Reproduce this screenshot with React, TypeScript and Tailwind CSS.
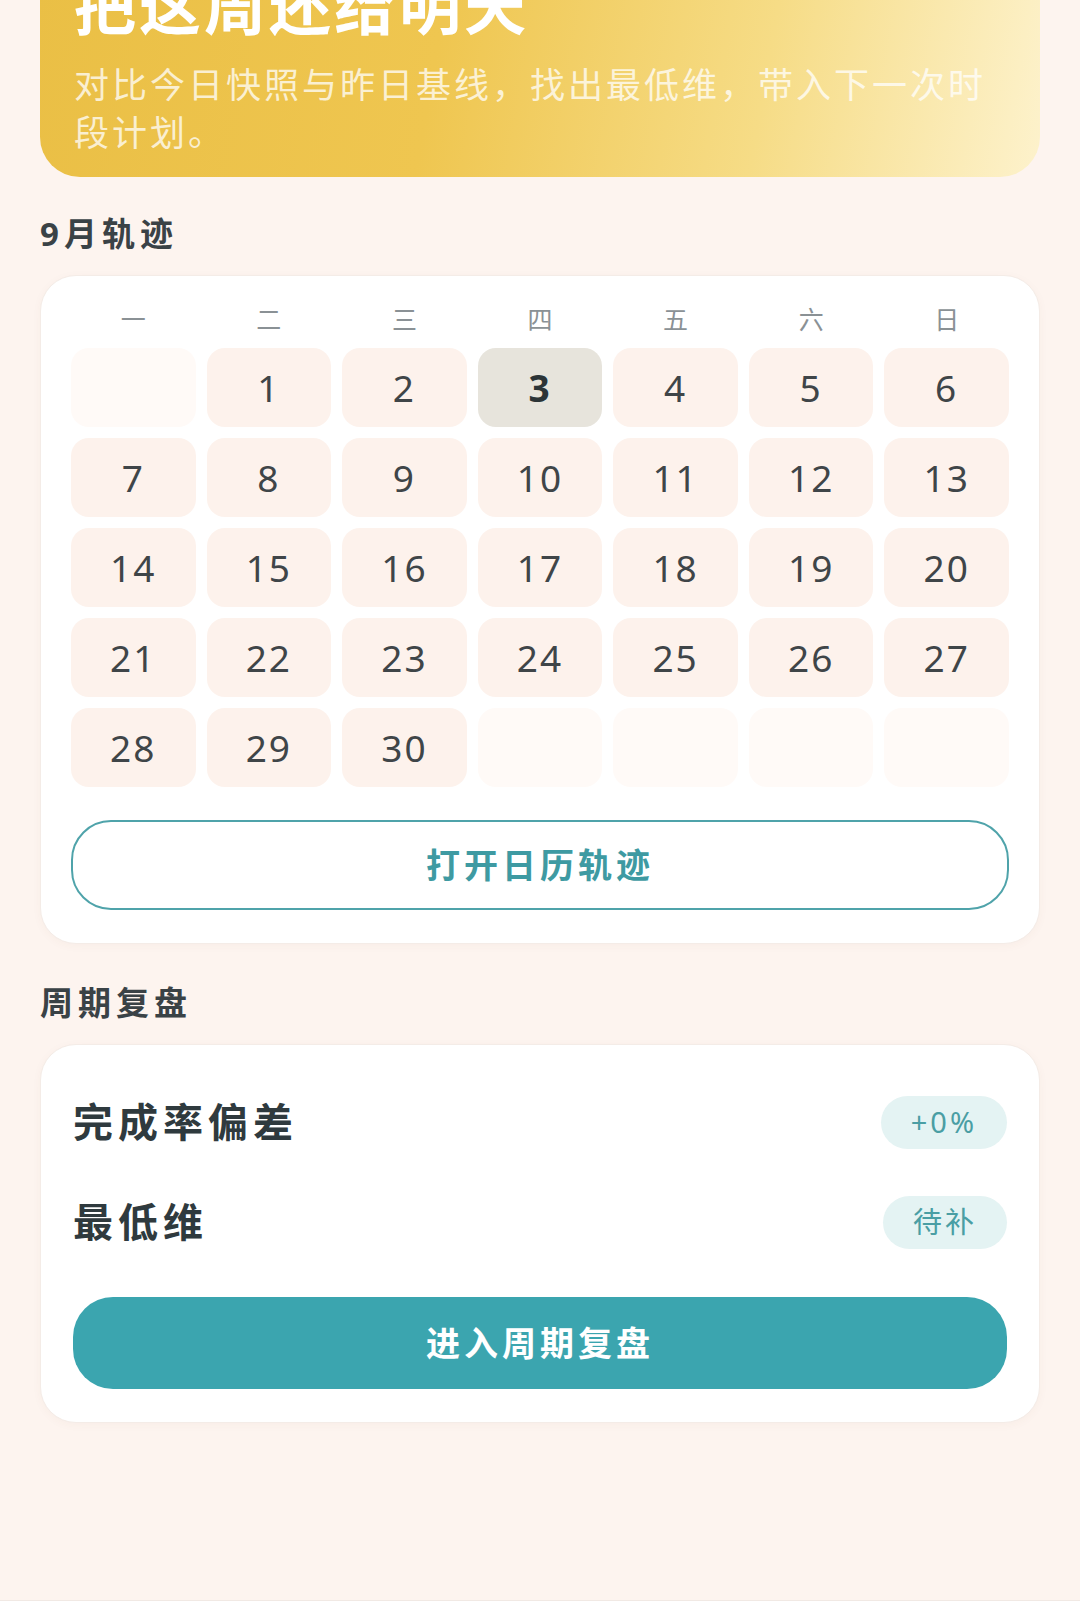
import React from 'react';

const WEEK = ['一', '二', '三', '四', '五', '六', '日'];
const TODAY = 3;

// Sept starts on Tuesday: one blank, 30 days, then blanks to fill 5 rows
const cells: (number | null)[] = [null, ...Array.from({ length: 30 }, (_, i) => i + 1)];
while (cells.length < 35) cells.push(null);

function DayCell({ day }: { day: number | null }) {
  if (day === null) return <div className="h-[79px] rounded-[18px] bg-[#fffaf7]" />;
  const today = day === TODAY;
  return (
    <div
      className={
        'h-[79px] rounded-[18px] flex items-center justify-center text-[37px] tracking-[2px] ' +
        (today ? 'bg-[#e7e4dc] font-bold text-[#2c3437]' : 'bg-[#fdf2ec] text-[#3f4548]')
      }
    >
      {day}
    </div>
  );
}

function Badge({ children }: { children: React.ReactNode }) {
  return (
    <span className="h-[53px] px-[30px] rounded-full bg-[#e4f3f3] text-[#4a9ea4] text-[29px] tracking-[3px] flex items-center">
      {children}
    </span>
  );
}

export default function App() {
  return (
    <div
      className="min-h-[1613px] bg-[#fdf4ef] flex flex-col overflow-hidden"
      style={{ fontFamily: '"Noto Sans", "Noto Sans CJK SC", sans-serif' }}
    >
      <div className="px-[40px] flex-1">
        {/* Hero card */}
        <div className="mt-[-60px] rounded-[40px] px-[34px] pt-[30px] pb-[20px] bg-[linear-gradient(100deg,#eabf45_0%,#efc650_40%,#f6dc86_72%,#fdf2cc_100%)]">
          <h1 className="text-[62px] leading-[72px] font-bold text-white tracking-[3px]">把这周还给明天</h1>
          <p className="mt-[19px] text-[35px] leading-[48px] text-white/75 tracking-[3px]">
            对比今日快照与昨日基线，找出最低维，带入下一次时段计划。
          </p>
        </div>

        {/* Calendar */}
        <h2 className="mt-[37px] text-[33px] leading-[40px] font-bold text-[#3a4246] tracking-[5px]">9月轨迹</h2>
        <div className="mt-[21px] rounded-[36px] bg-white border border-[#f4ece7] shadow-[0_2px_10px_rgba(120,80,60,0.04)] px-[30px] pt-[28px] pb-[33px]">
          <div className="grid grid-cols-7 gap-x-[11px] h-[30px]">
            {WEEK.map((w) => (
              <div key={w} className="text-center text-[25px] leading-[30px] text-[#8a9195]">{w}</div>
            ))}
          </div>
          <div className="mt-[14px] grid grid-cols-7 gap-[11px]">
            {cells.map((d, i) => (
              <DayCell key={i} day={d} />
            ))}
          </div>
          <button className="mt-[33px] w-full h-[90px] rounded-[40px] border-[2.5px] border-[#4fa3aa] text-[#3e9aa2] text-[34px] font-bold tracking-[4px] flex items-center justify-center">
            打开日历轨迹
          </button>
        </div>

        {/* Review */}
        <h2 className="mt-[39px] text-[33px] leading-[40px] font-bold text-[#3a4246] tracking-[5px]">周期复盘</h2>
        <div className="mt-[21px] rounded-[36px] bg-white border border-[#f4ece7] shadow-[0_2px_10px_rgba(120,80,60,0.04)] px-[32px] pt-[32px] pb-[33px]">
          <div className="flex flex-col gap-[10px]">
            <div className="h-[90px] flex items-center justify-between">
              <span className="text-[40px] font-bold text-[#2f3a3e] tracking-[5px]">完成率偏差</span>
              <Badge>+0%</Badge>
            </div>
            <div className="h-[90px] flex items-center justify-between">
              <span className="text-[40px] font-bold text-[#2f3a3e] tracking-[5px]">最低维</span>
              <Badge>待补</Badge>
            </div>
          </div>
          <button className="mt-[30px] w-full h-[92px] rounded-[40px] bg-[#3ba5af] text-white text-[34px] font-bold tracking-[4px] flex items-center justify-center">
            进入周期复盘
          </button>
        </div>
      </div>

      <div className="h-[13px] bg-white border-t border-[#f1e9e4]" />
    </div>
  );
}
